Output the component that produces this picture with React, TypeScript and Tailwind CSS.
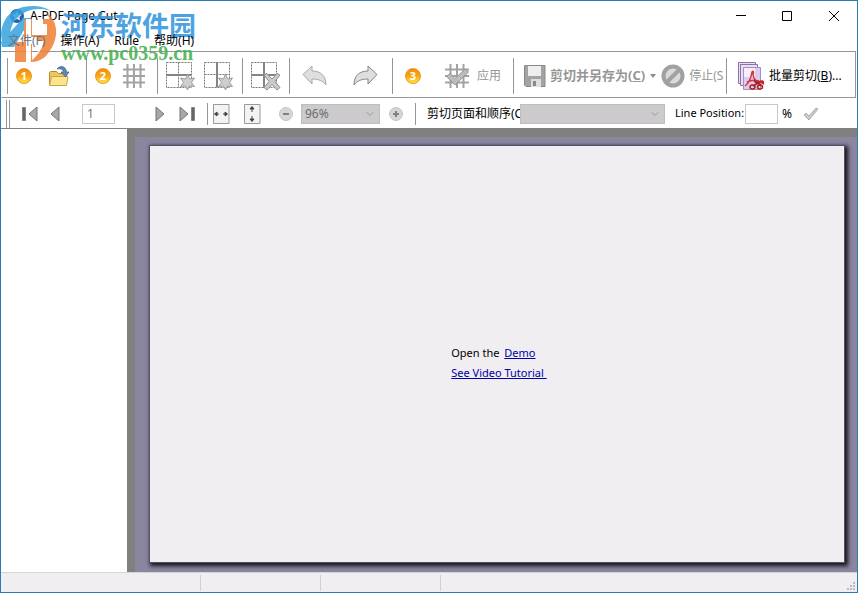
import React from 'react';
import { ChevronDown } from 'lucide-react';

const StepBadge = ({ step }: { step: string }) => (
  <span className="flex h-4 w-4 shrink-0 items-center justify-center rounded-full border border-[#e89a1c] bg-gradient-to-b from-[#f28a10] via-[#f9a516] to-[#ffe640] text-[11px] leading-none font-bold text-white">
    {step}
  </span>
);

const FolderIcon = () => (
  <svg width="22" height="22" viewBox="0 0 22 22">
    <path d="M1.500 20V7.500l1-1h6l2 2h7v4" fill="#eec65f" stroke="#b98a25" />
    <path d="M1.500 20.500 3.500 11.500h16.500l-1.500 9z" fill="#fbe58e" stroke="#c9a545" />
    <path d="M9 4c3-4 9-3 9.500 3H21l-3.500 5L13 7h2.500c0-2-2.500-4-6.500-3z" fill="#5c88b4" stroke="#3c5f88" strokeWidth=".7" />
  </svg>
);

const GridLines = () => (
  <path d="M5.500 0v24M12 0v24M18.500 0v24M0 5.500h24M0 12h24M0 18.500h24" stroke="#a3a3a3" strokeWidth="2" fill="none" />
);

const GridIcon = () => (
  <svg width="22" height="26" viewBox="1 0 22 24">
    <GridLines />
  </svg>
);

const GridCheckIcon = () => (
  <svg width="24" height="26" viewBox="0 0 24 24">
    <GridLines />
    <path d="M1.500 12.500 5 9.500l5 5L20 5l3.500 3L10 21z" fill="#bcbcbc" stroke="#8c8c8c" strokeWidth=".8" />
  </svg>
);

const SplitIcon = ({ kind }: { kind: 'horizontal' | 'vertical' | 'delete' }) => (
  <svg width="30" height="30" viewBox="0 0 30 30">
    <path d="M.5 1.500h25v25H.5zM12.500 1.500v25M.5 13.500h25" fill="none" stroke="#777" strokeDasharray="2 1" />
    {kind !== 'vertical' && <path d="M0 14h25" stroke="#858585" strokeWidth="2" />}
    {kind !== 'horizontal' && <path d="M13 1v25" stroke="#858585" strokeWidth="2" />}
    {kind === 'delete' ? (
      <path d="m13 14 3-1.500 5 5.500 5-5.500 3 1.500-5 6.500 5 6-3 2.500-5-5.500-5 5.500-3-2.500 5-6z" fill="#cacaca" stroke="#8e8e8e" />
    ) : (
      <path d="m21.500 13 2 5 5-1-3 4.500 3 4-5-.5-2 4-2-4-5 .5 3-4-3-4.500 5 1z" fill="#cfcfcf" stroke="#9c9c9c" />
    )}
  </svg>
);

const ArrowIcon = ({ flipped = false }: { flipped?: boolean }) => (
  <svg width="26" height="22" viewBox="0 0 26 22" className={flipped ? '-scale-x-100' : ''}>
    <path
      d="M1 9.500 10 1v5c9 0 14 5 14 14-3-4-7-6-14-6v5z"
      fill="#dedede"
      stroke={flipped ? '#858585' : '#a8a8a8'}
    />
  </svg>
);

const FloppyIcon = () => (
  <svg width="22" height="22" viewBox="0 0 22 22">
    <path d="M.5.500h20.500v21H2l-1.500-1.500z" fill="#a3a3a3" stroke="#898989" />
    <path d="M4 1h13v10H4z" fill="#eee" />
    <path d="M7 14h10v8H7z" fill="#dedede" />
    <path d="M9 16h3v5H9z" fill="#8a8a8a" />
  </svg>
);

const StopIcon = () => (
  <svg width="24" height="24" viewBox="0 0 24 24">
    <circle cx="12" cy="12" r="9.500" fill="#dadada" stroke="#a1a1a1" strokeWidth="4" />
    <path d="m5.500 18.500 13-13" stroke="#a1a1a1" strokeWidth="4" />
  </svg>
);

const BatchIcon = () => (
  <svg width="27" height="28" viewBox="0 0 27 28">
    <path d="M.5.500h17v21H.5z" fill="#e9def4" stroke="#8a72a6" />
    <path d="M2.500 2.500h17v21h-17z" fill="#e9def4" stroke="#8a72a6" />
    <path d="M5.500 5.500h17v22h-17z" fill="#dccdf0" stroke="#a48fbd" />
    <path d="M6 6h11v9H6z" fill="#f6effb" />
    <path d="M7 24c3-2 6-8 7-14 1-2 2 0 1 2 0 4 3 8 7 9M9 20c4-2 8-2 12-1" fill="none" stroke="#d83030" strokeWidth="1.500" />
    <path d="m15 24 8-5M24 24l-8-5" stroke="#93212a" strokeWidth="1.500" />
    <ellipse cx="14.500" cy="25" rx="2.500" ry="2" fill="none" stroke="#b31d1d" strokeWidth="1.500" />
    <ellipse cx="22" cy="25" rx="2.500" ry="2" fill="none" stroke="#b31d1d" strokeWidth="1.500" />
    <path d="m21 20 3-2 2 1v4z" fill="#d42020" />
  </svg>
);

const PagerIcon = ({ bar = false, flipped = false }: { bar?: boolean; flipped?: boolean }) => (
  <svg width={bar ? 17 : 10} height="16" viewBox={bar ? '0 0 17 16' : '0 0 10 16'} className={flipped ? '-scale-x-100' : ''}>
    <path d="M1 1v14l8-7z" fill="#a8a8a8" stroke="#757575" />
    {bar && <path d="M12.500 1.500h3v13h-3z" fill="#666" stroke="#858585" />}
  </svg>
);

const FitIcon = ({ vertical = false }: { vertical?: boolean }) => (
  <svg width="17" height="20" viewBox="0 0 17 20">
    <path d="M.5.500h15.500v19H.5z" fill="#f3f3f3" stroke="#999" />
    {vertical ? (
      <path d="M8 3v5M8 12v5M6 5l2-2.500L10 5zM6 15l2 2.500 2-2.500z" fill="#333" stroke="#444" />
    ) : (
      <path d="M2 10h4M10 10h4M4 8l-2.500 2L4 12zM12 8l2.500 2-2.500 2z" fill="#333" stroke="#444" />
    )}
  </svg>
);

const ZoomIcon = ({ plus = false }: { plus?: boolean }) => (
  <svg width="14" height="14" viewBox="0 0 14 14">
    <circle cx="7" cy="7" r="6.500" fill="#d6d6d6" stroke="#c4c4c4" />
    <path d={plus ? 'M4 7h6M7 4v6' : 'M4 7h6'} stroke="#808080" strokeWidth="2" />
  </svg>
);

const Group = ({ className, children }: { className: string; children: React.ReactNode }) => (
  <div className={`flex h-9 shrink-0 items-center border-l border-[#969696] ${className}`}>{children}</div>
);

const Watermark = () => (
  <div className="pointer-events-none absolute top-0 left-0 flex">
    <svg width="60" height="64" viewBox="0 0 60 64">
      <g opacity=".85">
        <path d="M50 10C38 2 13 3 4 19-1 28-1 37 3 45l9 1C7 36 9 24 16 17 25 8 38 6 50 10z" fill="#35a3df" />
        <path d="M22 17h8L13 46H1l-1-5z" fill="#35a3df" />
        <path d="M14 41h9v20h-9z" fill="#f08035" />
        <path d="M23 19h8v15h5v9h-5v18h-8z" fill="#f08035" />
        <path d="M25 18h5v18h7V18h5v43h-5V43h-7v18h-5z" fill="#fff" />
        <path d="M42 18h4c6 0 9 4 8 12-1 14-8 24-18 29l-7 2c7-6 12-12 14-21h-7v-6h10V23h-4z" fill="#f08035" />
        <path d="M46 12c13 10 12 29-2 44-4 3-9 5-14 5 11-6 19-17 20-29 0-8-1-14-4-20z" fill="#f08035" />
      </g>
    </svg>
    <div className="pt-2 opacity-85">
      <p className="font-['Noto_Sans_CJK_SC',sans-serif] text-[27px] leading-8 font-bold whitespace-nowrap text-[#2e94dd]">河东软件园</p>
      <p className="font-['Liberation_Serif',serif] text-xl leading-6 font-bold text-[#43ad4b]">www.pc0359.cn</p>
    </div>
  </div>
);

const App = () => {
  return (
    <div className="relative flex min-h-screen flex-col overflow-hidden border border-[#2b7bb5] bg-white font-['Noto_Sans','Noto_Sans_CJK_SC',sans-serif] text-xs text-black">
      <header className="flex h-[30px] items-center pl-2">
        <svg width="16" height="16" viewBox="0 0 16 16">
          <circle cx="8" cy="8" r="7" fill="#285f9c" />
          <path d="m8 3 1.500 3 3.500.5-2.500 2.500.5 3.500L8 11l-3 1.500.5-3.500L3 6.500 6.500 6z" fill="#cde6fa" />
        </svg>
        <h1 className="ml-[5px] flex-1">A-PDF Page Cut</h1>
        <button aria-label="Minimize" className="flex w-11 justify-center">
          <svg width="10" height="10"><path d="M0 4.500h10" stroke="#000" /></svg>
        </button>
        <button aria-label="Maximize" className="flex w-12 justify-center">
          <svg width="10" height="10"><path d="M.5.500h9v9h-9z" fill="none" stroke="#000" /></svg>
        </button>
        <button aria-label="Close" className="flex w-[46px] justify-center">
          <svg width="10" height="10"><path d="m0 0 10 10M10 0 0 10" stroke="#000" /></svg>
        </button>
      </header>

      <nav className="relative z-10 flex h-5 items-center gap-[15px] pl-[7px]">
        <button className="text-gray-500">文件(F)</button>
        <button>操作(A)</button>
        <button>Rule</button>
        <button>帮助(H)</button>
      </nav>

      <div className="mr-px flex h-[47px] items-center border border-[#969696] border-l-transparent pt-0.5 pl-[5px] whitespace-nowrap text-[#969696]">
        <Group className="w-[79px] gap-4 pl-2">
          <StepBadge step="1" />
          <button aria-label="Open"><FolderIcon /></button>
        </Group>
        <Group className="w-[71px] gap-3 pl-2">
          <StepBadge step="2" />
          <button aria-label="Grid"><GridIcon /></button>
        </Group>
        <Group className="w-[85px] gap-2 pl-2">
          <button aria-label="Add horizontal line"><SplitIcon kind="horizontal" /></button>
          <button aria-label="Add vertical line"><SplitIcon kind="vertical" /></button>
        </Group>
        <Group className="w-[47px] pl-2">
          <button aria-label="Delete line"><SplitIcon kind="delete" /></button>
        </Group>
        <Group className="w-[103px] gap-6 pl-3">
          <button aria-label="Undo"><ArrowIcon /></button>
          <button aria-label="Redo"><ArrowIcon flipped /></button>
        </Group>
        <Group className="w-[121px] gap-6 pl-3">
          <StepBadge step="3" />
          <button className="flex items-center gap-2"><GridCheckIcon />应用</button>
        </Group>
        <Group className="w-[213px] pl-[10px]">
          <button className="flex shrink-0 items-center gap-1 text-[13px] font-bold">
            <FloppyIcon />
            <span>剪切并另存为(<u>C</u>)</span>
          </button>
          <button aria-label="More save options" className="flex w-4 shrink-0 justify-center">
            <svg width="6" height="4"><path d="M0 0h6L3 4z" fill="#8c8c8c" /></svg>
          </button>
          <button className="flex shrink-0 items-center gap-1"><StopIcon />停止(S</button>
        </Group>
        <Group className="pl-[11px] text-black">
          <button className="flex items-center gap-1"><BatchIcon /><span>批量剪切(<u>B</u>)...</span></button>
        </Group>
      </div>

      <div className="flex h-[30px] items-center pt-px pl-[5px] whitespace-nowrap">
        <div className="h-7 w-1 shrink-0 border-x border-[#969696]" />
        <div className="flex w-[197px] shrink-0 items-center pl-[11px]">
          <button aria-label="First page"><PagerIcon bar flipped /></button>
          <button aria-label="Previous page" className="ml-3"><PagerIcon flipped /></button>
          <input aria-label="Page" defaultValue="1" className="ml-[22px] h-5 w-[33px] border border-[#c8c8c8] px-1 text-[#777]" />
          <button aria-label="Next page" className="ml-10"><PagerIcon /></button>
          <button aria-label="Last page" className="ml-[14px] shrink-0"><PagerIcon bar /></button>
        </div>
        <div className="flex h-[22px] w-[208px] shrink-0 items-center border-l border-[#969696] pl-[5px]">
          <button aria-label="Fit width"><FitIcon /></button>
          <button aria-label="Fit height" className="ml-[14px]"><FitIcon vertical /></button>
          <button aria-label="Zoom out" className="ml-[18px]"><ZoomIcon /></button>
          <div className="relative ml-2">
            <select aria-label="Zoom" className="h-5 w-[79px] appearance-none border border-[#bfbdc0] bg-[#cccacd] pl-[3px] text-[#6d6d6d]">
              <option>96%</option>
            </select>
            <ChevronDown className="pointer-events-none absolute top-1 right-1 text-[#999]" size={12} strokeWidth={2} />
          </div>
          <button aria-label="Zoom in" className="ml-[9px]"><ZoomIcon plus /></button>
        </div>
        <div className="flex h-[22px] min-w-0 flex-1 items-center border-l border-[#969696] pl-[11px]">
          <label htmlFor="order" className="w-[93px] shrink-0">剪切页面和顺序(C</label>
          <div className="relative shrink-0">
            <select id="order" className="h-5 w-[145px] appearance-none border border-[#bfbdc0] bg-[#cccacd]" />
            <ChevronDown className="pointer-events-none absolute top-1 right-1 text-[#999]" size={12} strokeWidth={2} />
          </div>
          <label htmlFor="line-position" className="ml-[10px] w-[70px] shrink-0 text-[11px]">Line Position:</label>
          <input id="line-position" className="h-5 w-[33px] shrink-0 border border-[#c8c8c8] px-1" />
          <span className="ml-1">%</span>
          <button aria-label="Apply position" className="ml-[11px]">
            <svg width="16" height="14" viewBox="0 0 16 14">
              <path d="m1 8 2-2 3 3 7-8 2 1-9 11z" fill="#cacaca" stroke="#a0a0a0" strokeWidth=".8" />
            </svg>
          </button>
        </div>
      </div>

      <main className="flex flex-1 border-t border-[#808080]">
        <aside className="w-[126px] shrink-0" />
        <section className="flex flex-1 bg-[#808080] pt-2 pl-2">
          <div className="flex flex-1 bg-[#8a86a0] pt-2 pr-3 pb-[9px] pl-[14px]">
            <div className="flex flex-1 items-center justify-center border border-[#55525f] bg-[#f0eef1] pt-[18px] pl-1 shadow-[2px_2px_4px_1px_#17151f]">
              <div className="text-[11px] leading-5">
                <p>Open the <a href="#demo" className="ml-0.5 text-[#0000a8] underline">Demo</a></p>
                <p><a href="#tutorial" className="whitespace-pre text-[#0000a8] underline">See Video Tutorial </a></p>
              </div>
            </div>
          </div>
        </section>
      </main>

      <footer className="flex h-5 items-center border-t border-[#d5d3d6] bg-[#f0eef1]">
        <div className="h-4 w-[200px] border-r border-[#d2d0d3]" />
        <div className="h-4 w-[120px] border-r border-[#d2d0d3]" />
        <div className="h-4 w-[120px] border-r border-[#d2d0d3]" />
        <svg width="10" height="10" className="mt-2 mr-px ml-auto">
          <path d="M7 0h2v2H7zM4 3h2v2H4zM7 3h2v2H7zM1 6h2v2H1zM4 6h2v2H4zM7 6h2v2H7z" fill="#bdbbbe" />
        </svg>
      </footer>

      <Watermark />
    </div>
  );
};

export default App;
